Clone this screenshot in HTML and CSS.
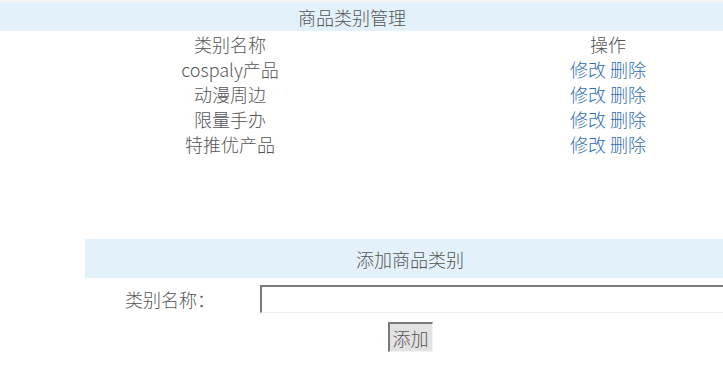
FILE: index.html
```html
<!DOCTYPE html>
<html lang="zh-CN">
<head>
<meta charset="utf-8">
<title>商品类别管理</title>
<link rel="stylesheet" href="styles.css">
</head>
<body>
<div class="page">
  <div class="topline"></div>
  <div class="band band-main">商品类别管理</div>
  <div class="list">
    <div class="row head"><div class="c1">类别名称</div><div class="c2">操作</div></div>
    <div class="row"><div class="c1">cospaly产品</div><div class="c2"><a href="#">修改</a> <a href="#">删除</a></div></div>
    <div class="row"><div class="c1">动漫周边</div><div class="c2"><a href="#">修改</a> <a href="#">删除</a></div></div>
    <div class="row"><div class="c1">限量手办</div><div class="c2"><a href="#">修改</a> <a href="#">删除</a></div></div>
    <div class="row"><div class="c1">特推优产品</div><div class="c2"><a href="#">修改</a> <a href="#">删除</a></div></div>
  </div>
  <form class="addform">
    <div class="band band-add">添加商品类别</div>
    <div class="field">
      <label class="lbl">类别名称：</label>
      <input class="inp" type="text">
    </div>
    <div class="actions"><button class="btn" type="button">添加</button></div>
  </form>
</div>
</body>
</html>
```
FILE: styles.css
```css
html, body {
  margin: 0;
  padding: 0;
  overflow: hidden;
  background: #fff;
}
body {
  font-family: "Noto Sans CJK SC", "Microsoft YaHei", sans-serif;
  font-size: 18px;
  font-weight: 300;
  color: #555;
}
.page {
  width: 723px;
  height: 366px;
  overflow: hidden;
}
.topline {
  height: 3px;
  background: #f3f3f3;
}
.band {
  background: #e3f1fa;
  display: flex;
  align-items: center;
  justify-content: center;
  line-height: 1;
}
.band-main {
  height: 28px;
  padding-right: 19px;
}
.list {
  display: flex;
  flex-direction: column;
}
.row {
  display: grid;
  grid-template-columns: 460px 296px;
  height: 25px;
  align-items: center;
  line-height: 1;
}
.c1, .c2 {
  text-align: center;
}
.c2 a {
  color: #2f6db5;
  text-decoration: none;
}
.addform {
  margin: 83px 0 0 85px;
  width: 650px;
}
.band-add {
  height: 39px;
}
.field {
  display: grid;
  grid-template-columns: 170px 480px;
  column-gap: 5px;
  align-items: center;
  margin-top: 7px;
}
.lbl {
  text-align: center;
  line-height: 1;
}
.inp {
  box-sizing: border-box;
  height: 28px;
  width: 480px;
  margin: 0;
  border-style: solid;
  border-width: 2px 1px 1px 2px;
  border-color: #7a7a7a #eeeeee #eeeeee #7a7a7a;
  background: #fff;
  font: inherit;
}
.actions {
  display: flex;
  justify-content: center;
  margin-top: 9px;
}
.btn {
  box-sizing: border-box;
  height: 30px;
  width: 45px;
  padding: 0;
  margin: 0;
  font: inherit;
  color: #555;
  line-height: 1;
  background: #e2e2e2;
  border-style: solid;
  border-width: 2px 1px 1px 2px;
  border-color: #7a7a7a #f2f2f2 #f2f2f2 #7a7a7a;
}
```
